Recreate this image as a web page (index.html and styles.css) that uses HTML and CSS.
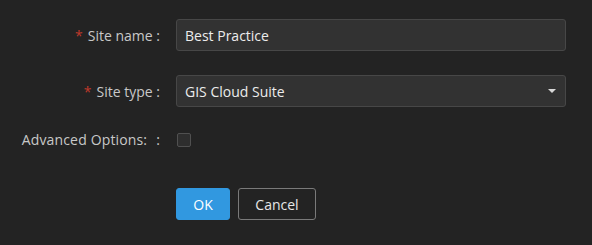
FILE: index.html
```html
<!DOCTYPE html>
<html>
<head>
<meta charset="utf-8">
<link rel="stylesheet" href="styles.css">
</head>
<body>
<form class="form">
  <div class="row">
    <label class="label"><span class="req">*</span>Site name :</label>
    <div class="control"><input class="input" type="text" value="Best Practice"></div>
  </div>
  <div class="row">
    <label class="label"><span class="req">*</span>Site type :</label>
    <div class="control">
      <div class="select">
        <span>GIS Cloud Suite</span>
        <svg class="arrow" width="8" height="4" viewBox="0 0 8 4"><path d="M0 0H8L4 4Z" fill="#d8d8d8"/></svg>
      </div>
    </div>
  </div>
  <div class="row row-check">
    <label class="label adv">Advanced Options:<span class="colon">:</span></label>
    <div class="control"><span class="checkbox"></span></div>
  </div>
  <div class="row row-actions">
    <div class="label"></div>
    <div class="control actions">
      <button type="button" class="btn btn-primary">OK</button>
      <button type="button" class="btn btn-default">Cancel</button>
    </div>
  </div>
</form>
</body>
</html>
```

FILE: styles.css
```css
html, body {
  margin: 0;
  padding: 0;
  background: #232323;
  height: 100%;
}
body {
  font-family: "Open Sans", "Noto Sans", sans-serif;
  font-size: 14px;
  color: #c8c8c8;
}
.form {
  padding-top: 19px;
}
.row {
  display: grid;
  grid-template-columns: 176px 390px;
  align-items: center;
  margin-bottom: 24px;
}
.label {
  text-align: right;
  padding-right: 16px;
  white-space: nowrap;
}
.adv {
  letter-spacing: 0.15px;
}
.req {
  color: #c0392b;
  margin-right: 5px;
}
.colon {
  margin-left: 9px;
}
.input, .select {
  box-sizing: border-box;
  width: 100%;
  height: 32px;
  background: #323232;
  border: 1px solid #474747;
  border-radius: 3px;
  color: #ececec;
  font-family: inherit;
  font-size: 14px;
  padding: 0 8px;
  outline: none;
}
.select {
  display: flex;
  align-items: center;
  justify-content: space-between;
}
.arrow {
  margin-right: 1px;
}
.row-check {
  height: 20px;
  line-height: 20px;
  margin-top: -1px;
  margin-bottom: 38px;
}
.checkbox {
  display: block;
  width: 12px;
  height: 12px;
  border: 1px solid #505050;
  border-radius: 2px;
  background: #2e2e2e;
  margin-left: 1px;
}
.actions {
  display: flex;
  gap: 8px;
}
.btn {
  height: 32px;
  border-radius: 3px;
  font-family: inherit;
  font-size: 14px;
  box-sizing: border-box;
  padding: 0;
}
.btn-primary {
  width: 54px;
  background: #3198e0;
  border: 1px solid #3198e0;
  color: #fff;
}
.btn-default {
  width: 78px;
  background: transparent;
  border: 1px solid #7a7a7a;
  color: #e6e6e6;
}
```
